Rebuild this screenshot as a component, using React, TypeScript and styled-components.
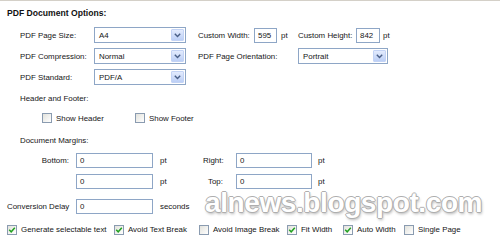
import styled, { createGlobalStyle } from "styled-components";

const GlobalStyle = createGlobalStyle`
  html, body {
    margin: 0;
    padding: 0;
    background: #fff;
  }
`;

const Page = styled.div`
  position: relative;
  width: 500px;
  height: 238px;
  box-sizing: border-box;
  border-top: 1px solid #d4d0c8;
  overflow: hidden;
  display: flex;
  flex-direction: column;
  font-family: "Liberation Sans", Arial, sans-serif;
  font-size: 7.9px;
  color: #161616;
`;

const Title = styled.div`
  height: 14px;
  margin-top: 5px;
  padding-left: 7px;
  display: flex;
  align-items: center;
  font-weight: bold;
  font-size: 8.6px;
  color: #111;
`;

const Row = styled.div<{ $mt: number; $pl: number; $h?: number }>`
  display: flex;
  align-items: center;
  height: ${(p) => p.$h ?? 16}px;
  margin-top: ${(p) => p.$mt}px;
  padding-left: ${(p) => p.$pl}px;
`;

const Label = styled.span<{ $w: number; $right?: boolean; $pl?: number; $ml?: number }>`
  width: ${(p) => p.$w}px;
  flex: none;
  box-sizing: border-box;
  margin-left: ${(p) => p.$ml ?? 0}px;
  padding-left: ${(p) => p.$pl ?? 0}px;
  padding-right: ${(p) => (p.$right ? 7 : 0)}px;
  text-align: ${(p) => (p.$right ? "right" : "left")};
  white-space: nowrap;
`;

const Unit = styled.span<{ $w?: number; $ml: number }>`
  width: ${(p) => (p.$w ? `${p.$w}px` : "auto")};
  flex: none;
  margin-left: ${(p) => p.$ml}px;
  white-space: nowrap;
`;

const SelectBox = styled.div<{ $w: number }>`
  width: ${(p) => p.$w}px;
  height: 16px;
  flex: none;
  box-sizing: border-box;
  border: 1px solid #8ea6c6;
  background: #fff;
  display: flex;
  align-items: center;
  padding: 1px;
`;

const SelectValue = styled.span`
  flex: 1;
  padding-left: 3px;
  white-space: nowrap;
`;

const ArrowButton = styled.span`
  width: 13px;
  height: 12px;
  flex: none;
  box-sizing: border-box;
  border: 1px solid #c3d3f5;
  border-radius: 1px;
  background: linear-gradient(#e3ebfd, #bccff6);
  display: flex;
  align-items: center;
  justify-content: center;
`;

const TextBox = styled.div<{ $w: number }>`
  width: ${(p) => p.$w}px;
  height: 15px;
  flex: none;
  box-sizing: border-box;
  border: 1px solid #8ea6c6;
  background: #fff;
  display: flex;
  align-items: center;
  padding-left: 3px;
`;

const CheckItem = styled.div<{ $w?: number }>`
  width: ${(p) => (p.$w ? `${p.$w}px` : "auto")};
  flex: none;
  display: flex;
  align-items: center;
  white-space: nowrap;
`;

const Box = styled.span`
  width: 10px;
  height: 10px;
  flex: none;
  box-sizing: border-box;
  border: 1px solid #8a9bb0;
  background: linear-gradient(135deg, #e2e2dc, #fff);
  display: flex;
  align-items: center;
  justify-content: center;
  margin-right: 4px;
`;

const Watermark = styled.div`
  position: absolute;
  left: 205px;
  top: 188px;
  font-family: "Liberation Sans", Arial, sans-serif;
  font-weight: bold;
  font-size: 28px;
  line-height: 28px;
  letter-spacing: -0.4px;
  color: #fff;
  text-shadow:
    -1px 0 0 #aeaeae,
    1px 0 0 #aeaeae,
    0 -1px 0 #aeaeae,
    0 1px 0 #aeaeae,
    1px 2px 3px rgba(0, 0, 0, 0.3);
  white-space: nowrap;
  pointer-events: none;
`;

const Select = ({ w, value }: { w: number; value: string }) => (
  <SelectBox $w={w}>
    <SelectValue>{value}</SelectValue>
    <ArrowButton>
      <svg width="7" height="5" viewBox="0 0 7 5">
        <path d="M0.8 0.8 L3.5 3.6 L6.2 0.8" fill="none" stroke="#4a5f86" strokeWidth="1.4" />
      </svg>
    </ArrowButton>
  </SelectBox>
);

const Check = ({ label, checked, w }: { label: string; checked?: boolean; w?: number }) => (
  <CheckItem $w={w}>
    <Box>
      {checked && (
        <svg width="8" height="8" viewBox="0 0 8 8">
          <path d="M1.2 3.8 L3.2 5.8 L6.8 1.8" fill="none" stroke="#21a121" strokeWidth="1.5" />
        </svg>
      )}
    </Box>
    {label}
  </CheckItem>
);

export default function App() {
  return (
    <>
      <GlobalStyle />
      <Page>
        <Title>PDF Document Options:</Title>

        <Row $mt={7} $pl={20}>
          <Label $w={74}>PDF Page Size:</Label>
          <Select w={92} value="A4" />
          <Label $w={56} $ml={12}>Custom Width:</Label>
          <TextBox $w={23}>595</TextBox>
          <Unit $w={17} $ml={4}>pt</Unit>
          <Label $w={58}>Custom Height:</Label>
          <TextBox $w={24}>842</TextBox>
          <Unit $ml={3}>pt</Unit>
        </Row>

        <Row $mt={5} $pl={20}>
          <Label $w={74}>PDF Compression:</Label>
          <Select w={92} value="Normal" />
          <Label $w={100} $ml={12}>PDF Page Orientation:</Label>
          <Select w={90} value="Portrait" />
        </Row>

        <Row $mt={5} $pl={20}>
          <Label $w={74}>PDF Standard:</Label>
          <Select w={92} value="PDF/A" />
        </Row>

        <Row $mt={6} $pl={20} $h={14}>
          <Label $w={120}>Header and Footer:</Label>
        </Row>

        <Row $mt={6} $pl={42} $h={14}>
          <Check label="Show Header" w={93} />
          <Check label="Show Footer" />
        </Row>

        <Row $mt={8} $pl={20} $h={14}>
          <Label $w={120}>Document Margins:</Label>
        </Row>

        <Row $mt={6} $pl={0} $h={15}>
          <Label $w={76} $right>Bottom:</Label>
          <TextBox $w={77}>0</TextBox>
          <Unit $w={43} $ml={7}>pt</Unit>
          <Label $w={33}>Right:</Label>
          <TextBox $w={76}>0</TextBox>
          <Unit $ml={6}>pt</Unit>
        </Row>

        <Row $mt={6} $pl={76} $h={15}>
          <TextBox $w={77}>0</TextBox>
          <Unit $w={43} $ml={7}>pt</Unit>
          <Label $w={33} $pl={5}>Top:</Label>
          <TextBox $w={76}>0</TextBox>
          <Unit $ml={6}>pt</Unit>
        </Row>

        <Row $mt={10} $pl={7} $h={15}>
          <Label $w={69}>Conversion Delay</Label>
          <TextBox $w={77}>0</TextBox>
          <Unit $ml={7}>seconds</Unit>
        </Row>

        <Row $mt={8} $pl={7} $h={15}>
          <Check label="Generate selectable text" checked w={107} />
          <Check label="Avoid Text Break" checked w={85} />
          <Check label="Avoid Image Break" w={88} />
          <Check label="Fit Width" checked w={56} />
          <Check label="Auto Width" checked w={61} />
          <Check label="Single Page" />
        </Row>

        <Watermark>alnews.blogspot.com</Watermark>
      </Page>
    </>
  );
}
